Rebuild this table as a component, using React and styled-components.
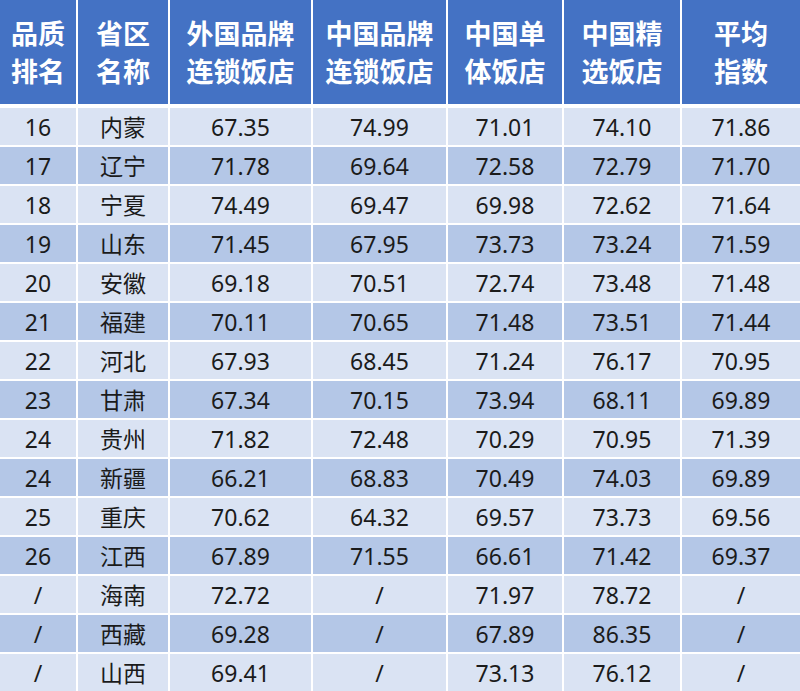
import React from "react";
import styled, { createGlobalStyle } from "styled-components";

const Global = createGlobalStyle`
  html, body { margin: 0; padding: 0; background: #fff; }
  body { width: 800px; height: 691px; overflow: hidden; }
`;

const COLS = "76px 90px 141px 133px 114px 116px 118px";

const Table = styled.div`
  display: flex;
  flex-direction: column;
  gap: 2px;
  width: 800px;
  background: #ffffff;
`;

const HeadRow = styled.div`
  display: grid;
  grid-template-columns: ${COLS};
  column-gap: 2px;
  height: 104px;
  margin-bottom: 2px;
`;

const HeadCell = styled.div`
  background: #4472c4;
  color: #ffffff;
  display: flex;
  align-items: center;
  justify-content: center;
  text-align: center;
  font-family: "Noto Sans CJK SC", "Noto Sans", sans-serif;
  font-weight: 700;
  font-size: 27px;
  line-height: 38px;
  padding-top: 0px;
`;

const Row = styled.div`
  display: grid;
  grid-template-columns: ${COLS};
  column-gap: 2px;
  height: 37px;
`;

const Cell = styled.div`
  background: ${(p) => (p.$dark ? "#b4c7e7" : "#dae3f3")};
  color: #1b1b1b;
  display: flex;
  align-items: center;
  justify-content: center;
  font-family: "Noto Sans", "Noto Sans CJK SC", sans-serif;
  font-size: 23px;
  line-height: 1;
  padding-top: 1px;
`;

const header = [
  ["品质", "排名"],
  ["省区", "名称"],
  ["外国品牌", "连锁饭店"],
  ["中国品牌", "连锁饭店"],
  ["中国单", "体饭店"],
  ["中国精", "选饭店"],
  ["平均", "指数"],
];

const rows = [
  ["16", "内蒙", "67.35", "74.99", "71.01", "74.10", "71.86"],
  ["17", "辽宁", "71.78", "69.64", "72.58", "72.79", "71.70"],
  ["18", "宁夏", "74.49", "69.47", "69.98", "72.62", "71.64"],
  ["19", "山东", "71.45", "67.95", "73.73", "73.24", "71.59"],
  ["20", "安徽", "69.18", "70.51", "72.74", "73.48", "71.48"],
  ["21", "福建", "70.11", "70.65", "71.48", "73.51", "71.44"],
  ["22", "河北", "67.93", "68.45", "71.24", "76.17", "70.95"],
  ["23", "甘肃", "67.34", "70.15", "73.94", "68.11", "69.89"],
  ["24", "贵州", "71.82", "72.48", "70.29", "70.95", "71.39"],
  ["24", "新疆", "66.21", "68.83", "70.49", "74.03", "69.89"],
  ["25", "重庆", "70.62", "64.32", "69.57", "73.73", "69.56"],
  ["26", "江西", "67.89", "71.55", "66.61", "71.42", "69.37"],
  ["/", "海南", "72.72", "/", "71.97", "78.72", "/"],
  ["/", "西藏", "69.28", "/", "67.89", "86.35", "/"],
  ["/", "山西", "69.41", "/", "73.13", "76.12", "/"],
];

export default function App() {
  return (
    <>
      <Global />
      <Table>
        <HeadRow>
          {header.map((h, i) => (
            <HeadCell key={i}>
              {h[0]}
              <br />
              {h[1]}
            </HeadCell>
          ))}
        </HeadRow>
        {rows.map((r, ri) => (
          <Row key={ri}>
            {r.map((c, ci) => (
              <Cell key={ci} $dark={ri % 2 === 1}>
                {c}
              </Cell>
            ))}
          </Row>
        ))}
      </Table>
    </>
  );
}
